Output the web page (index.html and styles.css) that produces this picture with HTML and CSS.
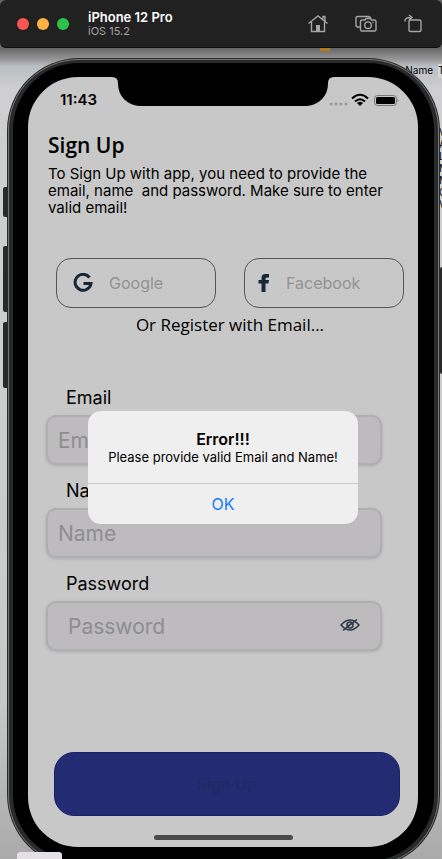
FILE: index.html
```html
<!DOCTYPE html>
<html lang="en">
<head>
<meta charset="utf-8">
<meta name="viewport" content="width=device-width, initial-scale=1">
<title>iPhone 12 Pro</title>
<link rel="stylesheet" href="styles.css">
</head>
<body>
<div class="desk" aria-hidden="true">
  <span class="desk-label">Name</span>
  <span class="desk-field">T</span>
  <span class="desk-alert"></span>
  <span class="desk-letters">V A L M M C V</span>
  <span class="desk-tab"></span>
</div>
<header class="toolbar">
  <div class="lights"><span class="light red"></span><span class="light amber"></span><span class="light green"></span></div>
  <div class="device"><strong>iPhone 12 Pro</strong><span>iOS 15.2</span></div>
  <div class="tools">
    <button aria-label="Home"><svg width="22" height="20" viewBox="0 0 22 20"><path d="M1.5 9.500 11 2l9.500 7.500M4.500 8v9.500h13V8M16 5V2.500h2V7.500"/><path class="solid" d="M9 11h4v6H9z"/></svg></button>
    <button aria-label="Screenshot"><svg width="22" height="20" viewBox="0 0 22 20"><path d="M5 13H2.500Q1 13 1 11.500V4Q1 2.500 2.500 2.500H13Q15.500 2.500 16 5M7.500 6H10l1-1.500h4.500L16.500 6H19.500Q21 6 21 7.500V15.500Q21 17 19.500 17H7Q5.500 17 5.500 15.500V7.500Q5.500 6 7.500 6Z"/><circle cx="13" cy="11.200" r="3.300"/><path d="M17.500 8.500h1"/></svg></button>
    <button aria-label="Rotate"><svg width="20" height="20" viewBox="0 0 20 20"><rect x="6" y="6" width="12" height="11.500" rx="1.500"/><path d="M2 7.500Q1.500 3.500 7.500 3.500M6 1l3 2.500-3 2.500"/></svg></button>
  </div>
</header>
<main class="phone">
  <span class="key mute"></span><span class="key up"></span><span class="key down"></span><span class="key power"></span>
  <div class="screen">
    <div class="status">
      <time>11:43</time>
      <div class="notch"><svg class="ear" width="6" height="6"><path d="M0 0H6V6Q6 0 0 0Z"/></svg><svg class="ear right" width="6" height="6"><path d="M6 0H0V6Q0 0 6 0Z"/></svg></div>
      <div class="signals">
        <svg width="70" height="14" viewBox="0 0 70 14"><g fill="#999"><circle cx="2" cy="11" r="1.500"/><circle cx="7" cy="11" r="1.500"/><circle cx="12" cy="11" r="1.500"/><circle cx="17" cy="11" r="1.500"/></g><g fill="none" stroke="#000" stroke-width="2"><path d="M23 5.500Q31-2 39 5.500M26 8.500Q31 4 36 8.500"/></g><path d="M28 10Q31 7.500 34 10L31 13Z"/><rect x="45.500" y="2.500" width="22" height="10" rx="3" fill="none" stroke="#777"/><rect x="47" y="4" width="19" height="7" rx="1.500"/><path d="M68.500 6v3l1.300-1.500z" fill="#777"/></svg>
      </div>
    </div>
    <form class="app">
      <h1>Sign Up</h1>
      <p class="intro">To Sign Up with app, you need to provide the email, name&nbsp; and password. Make sure to enter valid email!</p>
      <div class="socials">
        <button type="button" class="social"><svg width="20" height="20" viewBox="0 0 20 20"><path d="M16.500 4.500A8 8 0 1 0 18 10.500H10.500" fill="none" stroke="#182638" stroke-width="3"/></svg><span>Google</span></button>
        <button type="button" class="social facebook"><svg width="12" height="20" viewBox="0 0 12 20"><path d="M3.500 19V10.500H.5V7h3V5Q3.500 1 7.500 1H11V4.500H9Q7.500 4.500 7.500 6V7H11L10.400 10.500H7.500V19Z" fill="#182638"/></svg><span>Facebook</span></button>
      </div>
      <p class="alternative">Or Register with Email...</p>
      <div class="fields">
        <div class="field"><label for="email">Email</label><input id="email" type="email" placeholder="Email"></div>
        <div class="field"><label for="name">Name</label><input id="name" type="text" placeholder="Name"></div>
        <div class="field"><label for="password">Password</label><div class="secret"><input id="password" type="password" placeholder="Password"><button type="button" aria-label="Show password"><svg width="20" height="14" viewBox="0 0 20 14" fill="none" stroke="#2d394b" stroke-width="1.500"><path d="M1 7Q10-3 19 7Q10 17 1 7Z"/><circle cx="10" cy="7" r="3"/><path d="M3 12.500 17 1.500M8 8l4-3"/></svg></button></div></div>
      </div>
      <button class="submit">Sign Up</button>
    </form>
    <div class="home-bar"></div>
    <div class="alert" role="alertdialog" aria-labelledby="alert-title">
      <div class="message"><h2 id="alert-title">Error!!!</h2><p>Please provide valid Email and Name!</p></div>
      <button>OK</button>
    </div>
  </div>
</main>
</body>
</html>
```

FILE: styles.css
```css
* { box-sizing: border-box; }
body {
  margin: 0;
  min-height: 100vh;
  position: relative;
  overflow: hidden;
  font-family: Inter, "Liberation Sans", sans-serif;
  color: #000;
  background: linear-gradient(#666 48px, #999 60px, #b9bfc5 66px, #d0ced0 90px, #cfcfcf 160px, #c9c9c9 700px, #aaa);
}
button { font: inherit; padding: 0; border: 0; background: none; color: inherit; }
h1, h2, p { margin: 0; }
svg { display: block; }

.desk { font-size: 10px; line-height: 12px; }
.desk span { position: absolute; }
.desk-label { right: 9px; top: 64px; }
.desk-field { right: 0; top: 64px; width: 4px; height: 14px; overflow: hidden; background: #d8d8d8; }
.desk-alert { left: 320px; top: 48px; width: 10px; height: 3px; background: #b57a20; }
.desk-letters { right: 0; top: 126px; width: 3px; overflow: hidden; }
.desk-tab { left: 17px; top: 852px; width: 45px; height: 7px; border-radius: 3px 3px 0 0; background: #e4e1e4; z-index: 2; }

.toolbar {
  position: relative;
  height: 48px;
  padding: 0 19px 0 17px;
  display: flex;
  align-items: center;
  border-radius: 6px;
  background: #212121;
  border-bottom: 1px solid #0c0c0c;
}
.lights { display: flex; gap: 8px; }
.light { width: 12px; height: 12px; border-radius: 50%; }
.red { background: #fc5552; }
.amber { background: #fdb146; }
.green { background: #2bc24c; }
.device { margin-left: 19px; display: flex; flex-direction: column; line-height: 14px; font-size: 11px; color: #a2a2a2; }
.device strong { font-size: 13px; font-weight: 600; color: #fff; }
.tools { margin-left: auto; display: flex; gap: 26px; }
.tools svg { fill: none; stroke: #a5a5a5; stroke-width: 1.4; }
.tools .solid { fill: #a5a5a5; stroke: none; }

.phone {
  position: relative;
  margin: 10px 2px -8px 7px;
  padding: 14px 16px 14px 15px;
  border: 6px solid #292b2a;
  border-top-width: 5px;
  border-radius: 72px;
  background: #000;
  outline: 1px solid #777;
  outline-offset: -2px;
}
.key { position: absolute; left: -10px; width: 4px; background: #292929; border-radius: 2px 0 0 2px; }
.mute { top: 124px; height: 30px; }
.up { top: 183px; height: 66px; }
.down { top: 259px; height: 66px; }
.power { left: auto; right: -8px; top: 204px; width: 2px; height: 107px; }
.screen {
  position: relative;
  border-radius: 50px;
  background: #c8c8c8;
  overflow: hidden;
  display: flex;
  flex-direction: column;
}
.status { height: 45px; padding: 0 19px 0 32px; display: flex; align-items: center; justify-content: space-between; }
.status time { font-size: 15px; line-height: 18px; font-weight: 600; }
.notch { position: absolute; left: 90px; right: 90px; top: 0; height: 29px; border-radius: 0 0 22px 22px; background: #000; }
.ear { position: absolute; left: -6px; top: 0; }
.ear.right { left: auto; right: -6px; }

.app { padding: 10px 14px 0 20px; display: flex; flex-direction: column; }
h1 { font: 600 21px/26px "Open Sans", "Noto Sans", sans-serif; }
.intro { margin-top: 7px; font-size: 15px; line-height: 17px; }
.socials { margin: 42px 0 0 8px; display: grid; grid-template-columns: 1fr 1fr; gap: 28px; }
.social { height: 50px; padding-left: 16px; display: flex; align-items: center; gap: 16px; border: 1px solid #555; border-radius: 15px; font-size: 16px; color: #929292; }
.facebook { padding-left: 13px; }
.alternative { margin: 4px 0 0 8px; text-align: center; font: 17px/26px "Open Sans", "Noto Sans", sans-serif; }
.fields { margin: 49px 22px 0 -2px; display: flex; flex-direction: column; gap: 15px; }
.field { display: flex; flex-direction: column; gap: 6px; }
.field label { padding-left: 20px; font-size: 18px; line-height: 22px; }
.field input { width: 100%; height: 50px; padding: 0 10px; border: 2px solid #aeb0b0; border-radius: 10px; background: #bdbbbe; font: 21px/26px Inter, sans-serif; box-shadow: 0 1px 3px #aaa; outline: 0; }
.field input::placeholder { color: #8c8e91; opacity: 1; }
.secret { position: relative; }
.secret input { padding-left: 20px; }
.secret button { position: absolute; right: 22px; top: 17px; }
.submit { margin: 101px 4px 0 6px; height: 64px; border-radius: 20px; background: #232b73; border: 1px solid #192168; color: #202960; font-size: 16px; }
.home-bar { align-self: center; width: 139px; height: 5px; margin: 19px 0 7px; border-radius: 3px; background: #4b4b4b; }

.alert { position: absolute; top: 334px; left: 60px; right: 60px; border-radius: 13px; background: #efefef; overflow: hidden; text-align: center; }
.message { padding: 18px 8px 17px; }
.alert h2 { font-size: 16px; line-height: 20px; font-weight: 600; }
.alert p { font-size: 13px; line-height: 17px; }
.alert button { width: 100%; height: 41px; border-top: 1px solid #cacacc; color: #1479ff; font-size: 16px; }
```
